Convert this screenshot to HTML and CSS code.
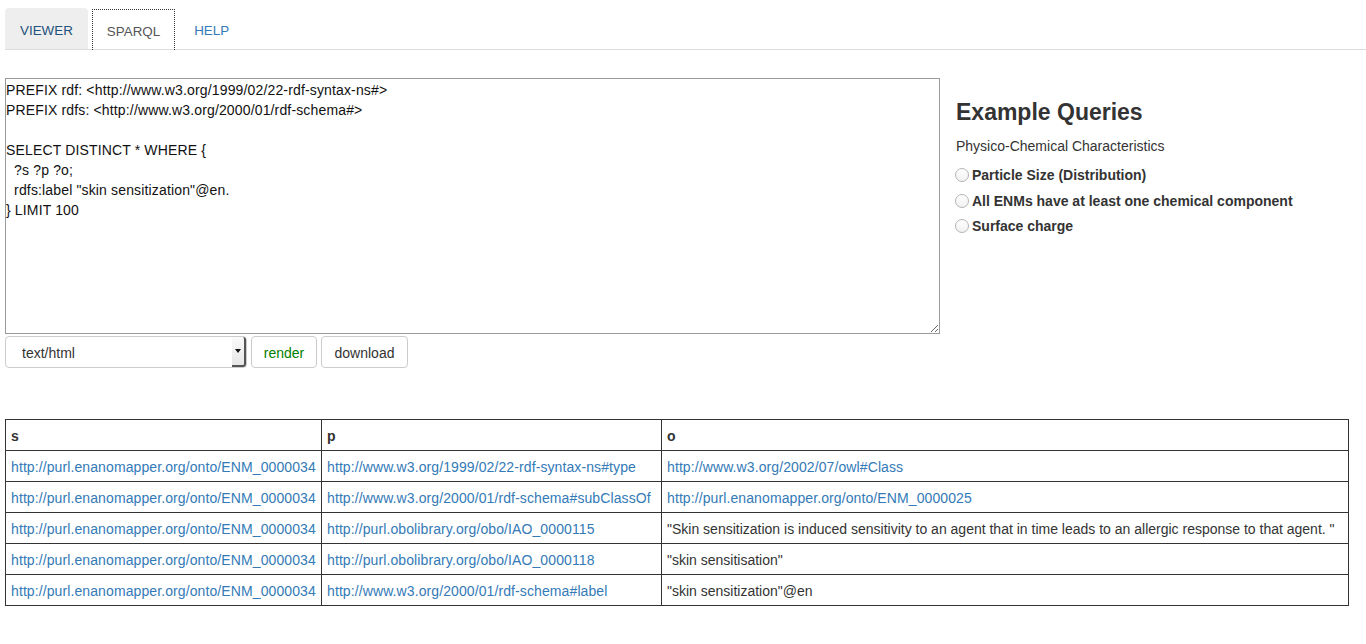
FILE: index.html
```html
<!DOCTYPE html>
<html>
<head>
<meta charset="utf-8">
<link rel="stylesheet" href="styles.css">
</head>
<body>
<div class="page">
  <ul class="tabs">
    <li class="tab tab-viewer"><a>VIEWER</a></li>
    <li class="tab tab-active"><a>SPARQL</a></li>
    <li class="tab"><a class="link">HELP</a></li>
  </ul>

  <div class="main">
    <div class="editor">
      <textarea class="query" spellcheck="false">PREFIX rdf: &lt;http://www.w3.org/1999/02/22-rdf-syntax-ns#&gt;
PREFIX rdfs: &lt;http://www.w3.org/2000/01/rdf-schema#&gt;

SELECT DISTINCT * WHERE {
  ?s ?p ?o;
  rdfs:label "skin sensitization"@en.
} LIMIT 100</textarea>
      <div class="controls">
        <div class="select-wrap">
          <select class="format"><option>text/html</option></select>
          <span class="arrow"><span class="tri"></span></span>
        </div>
        <button class="btn btn-render">render</button>
        <button class="btn btn-download">download</button>
      </div>
    </div>
    <div class="examples">
      <h2 class="ex-title">Example Queries</h2>
      <div class="ex-group">Physico-Chemical Characteristics</div>
      <label class="ex-item"><input type="radio" name="q" class="radio"><span>Particle Size (Distribution)</span></label>
      <label class="ex-item"><input type="radio" name="q" class="radio"><span>All ENMs have at least one chemical component</span></label>
      <label class="ex-item"><input type="radio" name="q" class="radio"><span>Surface charge</span></label>
    </div>
  </div>

  <table class="results">
    <colgroup><col class="c-s"><col class="c-p"><col class="c-o"></colgroup>
    <thead>
      <tr><th>s</th><th>p</th><th>o</th></tr>
    </thead>
    <tbody>
      <tr><td><a>http://purl.enanomapper.org/onto/ENM_0000034</a></td><td><a>http://www.w3.org/1999/02/22-rdf-syntax-ns#type</a></td><td><a>http://www.w3.org/2002/07/owl#Class</a></td></tr>
      <tr><td><a>http://purl.enanomapper.org/onto/ENM_0000034</a></td><td><a>http://www.w3.org/2000/01/rdf-schema#subClassOf</a></td><td><a>http://purl.enanomapper.org/onto/ENM_0000025</a></td></tr>
      <tr><td><a>http://purl.enanomapper.org/onto/ENM_0000034</a></td><td><a>http://purl.obolibrary.org/obo/IAO_0000115</a></td><td>"Skin sensitization is induced sensitivity to an agent that in time leads to an allergic response to that agent. "</td></tr>
      <tr><td><a>http://purl.enanomapper.org/onto/ENM_0000034</a></td><td><a>http://purl.obolibrary.org/obo/IAO_0000118</a></td><td>"skin sensitisation"</td></tr>
      <tr><td><a>http://purl.enanomapper.org/onto/ENM_0000034</a></td><td><a>http://www.w3.org/2000/01/rdf-schema#label</a></td><td>"skin sensitization"@en</td></tr>
    </tbody>
  </table>
</div>
</body>
</html>
```

FILE: styles.css
```css
* { box-sizing: border-box; }
html, body { margin: 0; padding: 0; background: #fff; }
body {
  font-family: "Liberation Sans", Arial, sans-serif;
  font-size: 14px;
  color: #333;
}
.page { padding: 8px 0 0 5px; }

.tabs {
  list-style: none;
  margin: 0;
  padding: 0;
  display: flex;
  gap: 4px;
  border-bottom: 1px solid #ddd;
  height: 42px;
  font-size: 13.4px;
}
.tab a {
  display: block;
  height: 41px;
  padding: 4px 15px 0;
  line-height: 37px;
  color: #337ab7;
  border-radius: 4px 4px 0 0;
}
.tab-viewer a { background: #eee; color: #23527c; padding: 4px 15px 0; }
.tab-active a {
  color: #555;
  border: 1px dotted #333;
  border-bottom: none;
  margin-top: 1px;
  height: 41px;
  padding: 3px 14px 0;
  line-height: 37px;
  border-radius: 0;
}

.main {
  display: flex;
  margin-top: 28px;
}
.editor { width: 935px; flex: none; }
.query {
  display: block;
  width: 935px;
  height: 256px;
  margin: 0;
  padding: 1px 0 0 0;
  border: 1px solid #9a9a9a;
  font-family: "Liberation Sans", Arial, sans-serif;
  font-size: 14px;
  line-height: 20px;
  letter-spacing: 0.15px;
  color: #111;
  resize: both;
  outline: none;
}
.controls {
  display: flex;
  gap: 4px;
  margin-top: 2px;
}
.select-wrap {
  position: relative;
  width: 242px;
  height: 32px;
}
.format {
  appearance: none;
  -webkit-appearance: none;
  width: 100%;
  height: 100%;
  border: 1px solid #ccc;
  border-radius: 4px;
  background: #fff;
  padding: 1px 0 0 16px;
  font-family: "Liberation Sans", Arial, sans-serif;
  font-size: 14px;
  color: #333;
}
.arrow {
  position: absolute;
  right: 1px;
  top: 1px;
  width: 14px;
  height: 30px;
  background: linear-gradient(#fafafa, #e6e6e6);
  border-right: 2px solid #555;
  border-bottom: 2px solid #555;
  border-radius: 0 3px 3px 0;
  display: flex;
  align-items: center;
  justify-content: center;
}
.tri {
  width: 0; height: 0;
  border-left: 3px solid transparent;
  border-right: 3px solid transparent;
  border-top: 4px solid #111;
}
.btn {
  height: 32px;
  border: 1px solid #ccc;
  border-radius: 4px;
  background: #fff;
  font-family: "Liberation Sans", Arial, sans-serif;
  font-size: 14px;
  color: #333;
  padding: 2px 0 0;
}
.btn-render { color: #008000; width: 66px; }
.btn-download { width: 87px; }

.examples { margin-left: 16px; padding-top: 20px; }
.ex-title {
  margin: 0;
  font-size: 23px;
  font-weight: bold;
  line-height: 28px;
  color: #333;
}
.ex-group { margin-top: 10px; line-height: 20px; }
.ex-item {
  display: flex;
  align-items: center;
  font-weight: bold;
  margin-top: 9px;
  line-height: 20px;
  height: 20px;
}
.ex-item + .ex-item { margin-top: 5.5px; }
.radio {
  appearance: none;
  -webkit-appearance: none;
  width: 14px;
  height: 14px;
  margin: 0 3px 0 -1px;
  border: 1px solid #b5b5b5;
  border-radius: 50%;
  background: linear-gradient(#fff, #f1f1f1);
}

.results {
  margin-top: 51px;
  width: 1343px;
  border-collapse: collapse;
  table-layout: fixed;
}
.c-s { width: 316px; }
.c-p { width: 340px; }
.c-o { width: 687px; }
.results th, .results td {
  border: 1px solid #333;
  height: 31px;
  padding: 2px 5px 0;
  text-align: left;
  white-space: nowrap;
  overflow: hidden;
  line-height: 20px;
}
.results th { font-weight: bold; }
.results a { color: #337ab7; letter-spacing: 0.1px; }
```
